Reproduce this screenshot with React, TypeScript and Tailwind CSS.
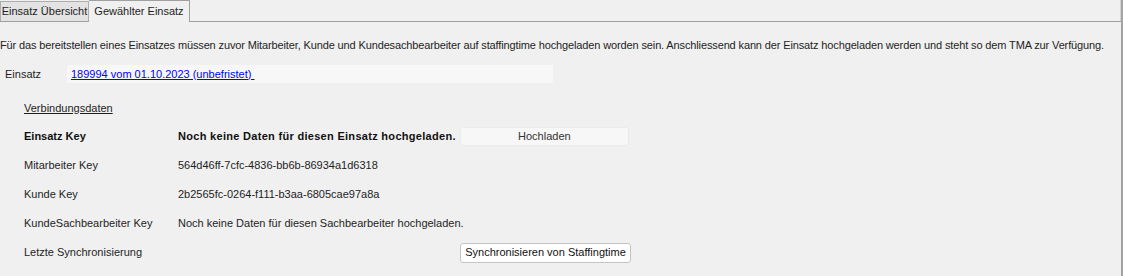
import React from 'react'

const font = { fontFamily: '"Liberation Sans", Arial, sans-serif' }

function Row({ label, bold, children }: { label: string; bold?: boolean; children?: React.ReactNode }) {
  return (
    <div className="flex h-[29px] items-center">
      <div className={`w-[154px] shrink-0 ${bold ? 'font-bold text-[#111]' : ''}`}>{label}</div>
      <div className="flex items-center">{children}</div>
    </div>
  )
}

export default function App() {
  return (
    <div
      className="h-[276px] w-[1123px] overflow-hidden bg-[#f0f0f0] text-[11px] leading-none text-[#1e1e1e] border-r-2 border-[#a3a3a3]"
      style={font}
    >
      {/* tab strip */}
      <div className="flex h-[22px] items-end border-b border-[#a0a0a0]">
        <div className="flex h-[20px] w-[89px] items-center justify-center border border-b-0 border-[#adadad] bg-[#e3e3e3]">
          Einsatz Übersicht
        </div>
        <div className="-mb-px flex h-[22px] w-[101px] items-center justify-center border border-b-0 border-l-0 border-[#a0a0a0] bg-[#f0f0f0]">
          Gewählter Einsatz
        </div>
        <div className="flex-1" />
        <div className="h-full w-px bg-[#d4d4d4]" />
      </div>

      <div className="pt-[18px]">
        <p className="h-[10px] whitespace-nowrap tracking-[-0.13px]">
          Für das bereitstellen eines Einsatzes müssen zuvor Mitarbeiter, Kunde und Kundesachbearbeiter auf staffingtime
          hochgeladen worden sein. Anschliessend kann der Einsatz hochgeladen werden und steht so dem TMA zur Verfügung.
        </p>

        <div className="mt-[15px] flex h-[18px] items-center">
          <span className="w-[67px] pl-[5px]">Einsatz</span>
          <div className="flex h-full w-[486px] items-center bg-[#f7f7f7] pl-[4px]">
            <a href="#" className="text-[#0000ff] underline underline-offset-1">
              189994 vom 01.10.2023 (unbefristet)&nbsp;
            </a>
          </div>
        </div>

        <div className="mt-[20px] pl-[24px]">
          <span className="underline underline-offset-1">Verbindungsdaten</span>
        </div>

        <div className="mt-[8px] pl-[24px]">
          <Row label="Einsatz Key" bold>
            <span className="font-bold tracking-[0.3px] text-[#111]">Noch keine Daten für diesen Einsatz hochgeladen.</span>
            <button className="ml-[4px] h-[19px] w-[169px] rounded-[3px] border border-[#ebebeb] bg-[#f7f7f7] text-[#333]">
              Hochladen
            </button>
          </Row>
          <Row label="Mitarbeiter Key">564d46ff-7cfc-4836-bb6b-86934a1d6318</Row>
          <Row label="Kunde Key">2b2565fc-0264-f111-b3aa-6805cae97a8a</Row>
          <Row label="KundeSachbearbeiter Key">Noch keine Daten für diesen Sachbearbeiter hochgeladen.</Row>
          <Row label="Letzte Synchronisierung">
            <button className="ml-[282px] h-[20px] w-[171px] rounded-[3px] border border-[#c4c4c4] bg-white text-[#111]">
              Synchronisieren von Staffingtime
            </button>
          </Row>
        </div>
      </div>
    </div>
  )
}
